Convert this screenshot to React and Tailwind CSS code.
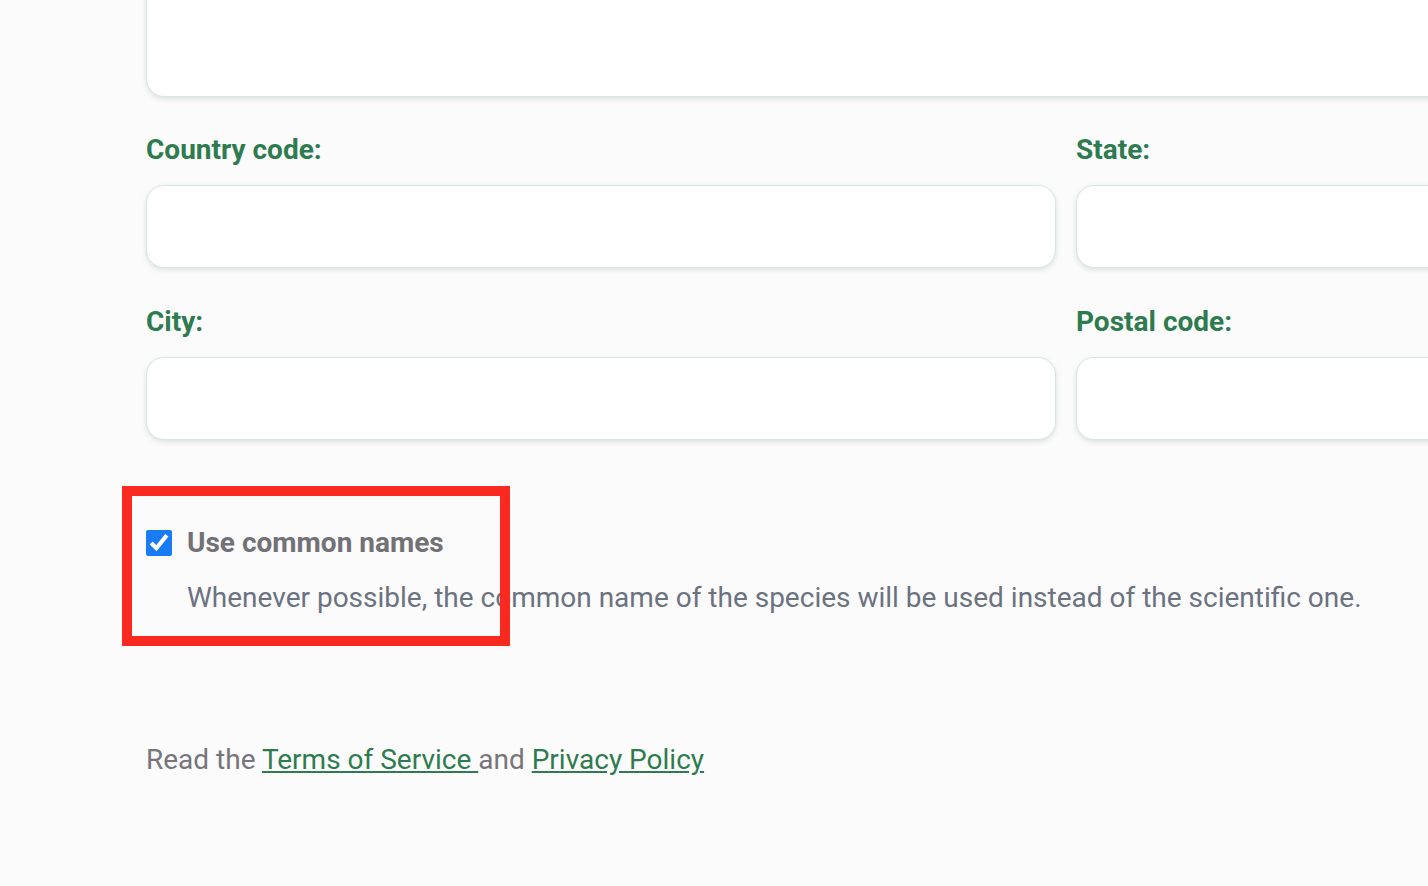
import React, { useState } from 'react';

const Field = ({ label }) => (
    <div className="flex flex-col">
        <label className="text-[28px] font-bold text-[#2e7b4f] leading-none mb-[21px]">{label}</label>
        <input
            type="text"
            className="h-[83px] w-full rounded-[18px] border border-[#d9e6e2] bg-white shadow-[0_2px_5px_rgba(120,160,150,0.25)] focus:outline-none"
        />
    </div>
);

const App = () => {
    const [common, setCommon] = useState(true);

    return (
        <div className="w-full h-[886px] overflow-hidden bg-[#fbfbfb] font-['Roboto',sans-serif] relative">
            <div className="pl-[146px] w-[1986px]">
                <div className="-mt-[80px] h-[177px] rounded-[18px] border border-[#d9e6e2] bg-white shadow-[0_2px_5px_rgba(120,160,150,0.25)]" />

                <div className="grid grid-cols-2 gap-x-5 gap-y-[40px] mt-[39px]">
                    <Field label="Country code:" />
                    <Field label="State:" />
                    <Field label="City:" />
                    <Field label="Postal code:" />
                </div>

                <div className="mt-[82px]">
                    <label className="flex items-center gap-[15px] h-[42px] cursor-pointer">
                        <input
                            type="checkbox"
                            checked={common}
                            onChange={(e) => setCommon(e.target.checked)}
                            className="w-[26px] h-[26px] accent-[#1a7cf5] m-0"
                        />
                        <span className="text-[28px] leading-[42px] font-bold text-[#727176]">Use common names</span>
                    </label>
                    <p className="ml-[41px] mt-[13px] text-[28px] leading-[42px] text-[#6b7280]">
                        Whenever possible, the common name of the species will be used instead of the scientific one.
                    </p>
                </div>

                <p className="mt-[120px] text-[28px] leading-[42px] text-[#76757b]">
                    Read the <a href="#" className="text-[#2e7b4f] underline">Terms of Service </a>and <a href="#" className="text-[#2e7b4f] underline">Privacy Policy</a>
                </p>
            </div>

            <div className="absolute left-[122px] top-[486px] w-[388px] h-[160px] border-[10px] border-[#fb2a20] pointer-events-none" />
        </div>
    );
};

export default App;
